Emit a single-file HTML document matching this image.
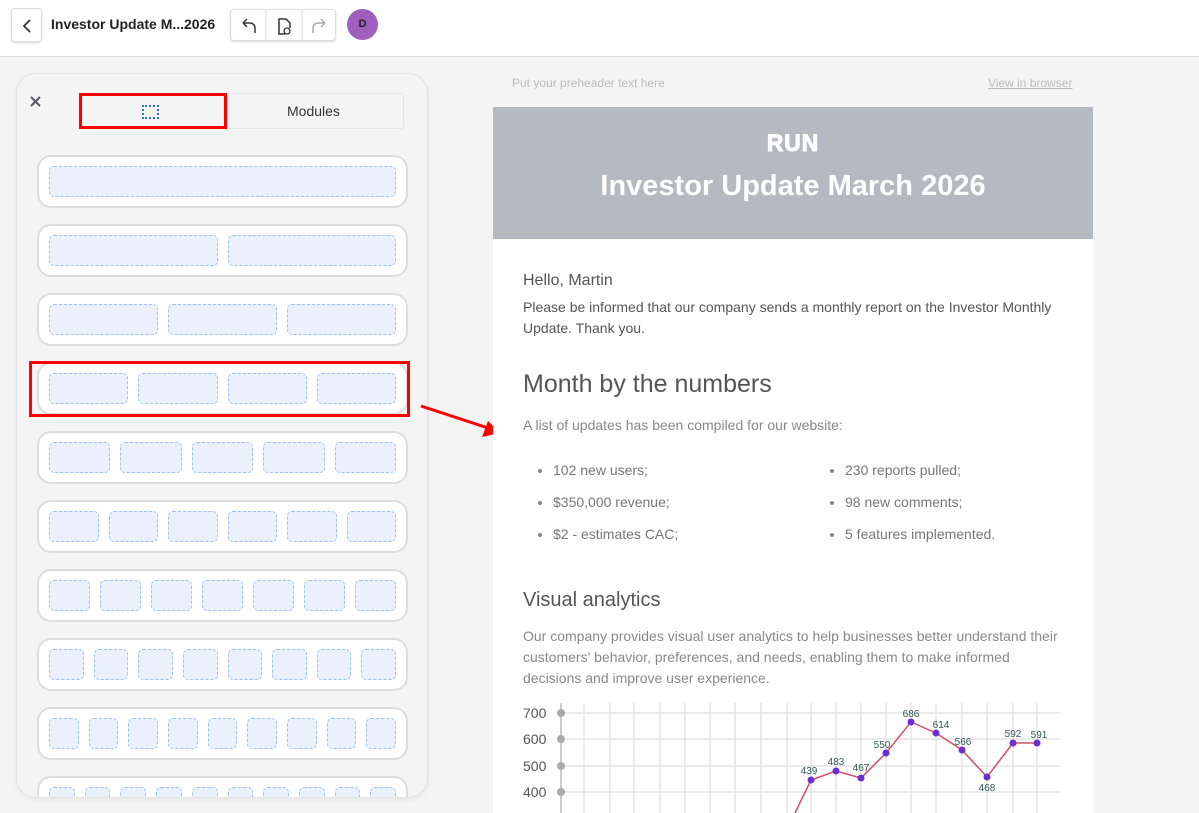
<!DOCTYPE html>
<html><head><meta charset="utf-8"><style>
*{box-sizing:border-box;margin:0;padding:0}
body{width:1199px;height:813px;overflow:hidden;background:#f4f4f5;font-family:"Liberation Sans",Arial,sans-serif;position:relative}
.top{position:absolute;left:0;top:0;width:1199px;height:57px;background:#fff;border-bottom:1px solid #ddd}
.btn{position:absolute;background:#fff;border:1px solid #ddd;border-radius:4px;box-shadow:0 1px 2px rgba(0,0,0,.15)}
.panel{position:absolute;left:16px;top:73px;width:412px;height:725px;background:#f4f4f4;border:1px solid #e2e2e2;border-radius:20px;overflow:hidden;box-shadow:0 2px 6px rgba(0,0,0,.06)}
.row{position:absolute;left:20px;width:371px;height:53px;background:#fff;border:2px solid #ddd;border-radius:14px;display:flex;gap:10px;padding:9px 10px}
.row div{flex:1;background:#eaf1fc;border:1px dashed #9dc1ee;border-radius:5px}
.email{position:absolute;left:493px;top:107px;width:600px;height:706px;background:#fff}
.hdr{height:132px;background:#b5bac1;color:#fff;text-align:center}
.p{position:absolute;left:30px;color:#555;font-size:14px;line-height:21px}
li{list-style:none;position:relative;padding-left:30px;color:#777;font-size:14px;height:32px}
li:before{content:"";position:absolute;left:15px;top:7px;width:4px;height:4px;border-radius:50%;background:#888}
</style></head><body>
<div class="top">
 <div class="btn" style="left:11px;top:8px;width:31px;height:34px"><svg width="31" height="34"><path d="M18 11 L12 17 L18 23" fill="none" stroke="#333" stroke-width="1.8"/></svg></div>
 <div style="position:absolute;left:51px;top:16px;font-size:14px;font-weight:bold;color:#222">Investor Update M...2026</div>
 <div class="btn" style="left:230px;top:9px;width:106px;height:32px">
  <svg width="106" height="32"><path d="M12 13h7a5 5 0 0 1 5 5v5 M12 13l4-4 M12 13l4 4" fill="none" stroke="#333" stroke-width="1.5"/><line x1="35" y1="0" x2="35" y2="32" stroke="#ddd"/><line x1="71" y1="0" x2="71" y2="32" stroke="#ddd"/><path d="M54 24h-6v-15h7l4 4v5" fill="none" stroke="#333" stroke-width="1.5"/><circle cx="56" cy="21" r="3" fill="none" stroke="#333" stroke-width="1.3"/><path d="M94 13h-7a5 5 0 0 0-5 5v5 M94 13l-4-4 M94 13l-4 4" fill="none" stroke="#aaa" stroke-width="1.5"/></svg></div>
 <div style="position:absolute;left:347px;top:9px;width:31px;height:31px;border-radius:50%;background:#a05fbf;color:#222;font-size:11px;font-weight:bold;text-align:center;line-height:31px">D</div>
</div>
<div class="panel">
 <svg style="position:absolute;left:13px;top:22px" width="11" height="11"><path d="M1 1L10 10M10 1L1 10" stroke="#556" stroke-width="2"/></svg>
 <div style="position:absolute;left:62px;top:19px;width:325px;height:36px;background:#f5f5f6;border:1px solid #e5e5e5;border-radius:3px"></div>
 <div style="position:absolute;left:62px;top:19px;width:148px;height:36px;border:3px solid #f00"></div>
 <div style="position:absolute;left:125px;top:31px;width:17px;height:14px;border:2px dotted #2f6fd6"></div>
 <div style="position:absolute;left:270px;top:29px;font-size:14px;color:#333">Modules</div>
 <div class="row" style="top:81px"><div></div></div>
 <div class="row" style="top:150px"><div></div><div></div></div>
 <div class="row" style="top:219px"><div></div><div></div><div></div></div>
 <div class="row" style="top:288px"><div></div><div></div><div></div><div></div></div>
 <div class="row" style="top:357px"><div></div><div></div><div></div><div></div><div></div></div>
 <div class="row" style="top:426px"><div></div><div></div><div></div><div></div><div></div><div></div></div>
 <div class="row" style="top:495px"><div></div><div></div><div></div><div></div><div></div><div></div><div></div></div>
 <div class="row" style="top:564px"><div></div><div></div><div></div><div></div><div></div><div></div><div></div><div></div></div>
 <div class="row" style="top:633px"><div></div><div></div><div></div><div></div><div></div><div></div><div></div><div></div><div></div></div>
 <div class="row" style="top:702px"><div></div><div></div><div></div><div></div><div></div><div></div><div></div><div></div><div></div><div></div></div>
 <div style="position:absolute;left:12px;top:287px;width:381px;height:56px;border:3px solid #f00"></div>
</div>
<svg style="position:absolute;left:418px;top:400px" width="90" height="45"><line x1="3" y1="6" x2="70" y2="28" stroke="#f00" stroke-width="3"/><path d="M82 33 L64 37 L70 21 Z" fill="#f00"/></svg>
<div style="position:absolute;left:512px;top:76px;font-size:12px;color:#bbb">Put your preheader text here</div>
<div style="position:absolute;left:988px;top:76px;font-size:12px;color:#bbb;text-decoration:underline">View in browser</div>
<div class="email">
 <div class="hdr"><div style="padding-top:23px;font-size:24px;font-weight:900;letter-spacing:1px;transform:scaleX(0.95);-webkit-text-stroke:1px #fff">RUN</div><div style="margin-top:12px;font-size:29px;font-weight:bold">Investor Update March 2026</div></div>
 <div class="p" style="top:163px;font-size:16px">Hello, Martin</div>
 <div class="p" style="top:190px;width:540px">Please be informed that our company sends a monthly report on the Investor Monthly Update. Thank you.</div>
 <div class="p" style="top:262px;font-size:25px;line-height:30px">Month by the numbers</div>
 <div class="p" style="top:308px;color:#888">A list of updates has been compiled for our website:</div>
 <ul style="position:absolute;left:30px;top:355px"><li>102 new users;</li><li>$350,000 revenue;</li><li>$2 - estimates CAC;</li></ul>
 <ul style="position:absolute;left:322px;top:355px"><li>230 reports pulled;</li><li>98 new comments;</li><li>5 features implemented.</li></ul>
 <div class="p" style="top:481px;font-size:20px;line-height:24px">Visual analytics</div>
 <div class="p" style="top:519px;width:545px;color:#888">Our company provides visual user analytics to help businesses better understand their customers' behavior, preferences, and needs, enabling them to make informed decisions and improve user experience.</div>
</div>
<svg style="position:absolute;left:493px;top:695px" width="600" height="118" font-family="Liberation Sans" >
 <g stroke="#e4e4e4" stroke-width="1.5">
  <line x1="68" y1="18" x2="567" y2="18"/><line x1="68" y1="44" x2="567" y2="44"/><line x1="68" y1="71" x2="567" y2="71"/><line x1="68" y1="97" x2="567" y2="97"/>
  <line x1="91" y1="8" x2="91" y2="118"/><line x1="117" y1="8" x2="117" y2="118"/><line x1="141" y1="8" x2="141" y2="118"/><line x1="167" y1="8" x2="167" y2="118"/><line x1="192" y1="8" x2="192" y2="118"/><line x1="217" y1="8" x2="217" y2="118"/><line x1="242" y1="8" x2="242" y2="118"/><line x1="268" y1="8" x2="268" y2="118"/><line x1="294" y1="8" x2="294" y2="118"/><line x1="318" y1="8" x2="318" y2="118"/><line x1="343" y1="8" x2="343" y2="118"/><line x1="368" y1="8" x2="368" y2="118"/><line x1="393" y1="8" x2="393" y2="118"/><line x1="418" y1="8" x2="418" y2="118"/><line x1="443" y1="8" x2="443" y2="118"/><line x1="469" y1="8" x2="469" y2="118"/><line x1="494" y1="8" x2="494" y2="118"/><line x1="520" y1="8" x2="520" y2="118"/><line x1="544" y1="8" x2="544" y2="118"/>
 </g>
 <line x1="68" y1="8" x2="68" y2="118" stroke="#bbb" stroke-width="1.5"/>
 <g fill="#aaa"><circle cx="68" cy="18" r="4"/><circle cx="68" cy="44" r="4"/><circle cx="68" cy="71" r="4"/><circle cx="68" cy="97" r="4"/></g>
 <g font-size="14" fill="#555"><text x="30" y="23">700</text><text x="30" y="49">600</text><text x="30" y="76">500</text><text x="30" y="102">400</text></g>
 <polyline points="302,118 318,85 343,76 368,83 393,58 418,27 443,38 469,55 494,82 520,48 544,48" fill="none" stroke="#d0506a" stroke-width="1.5"/>
 <g fill="#6a2fd0"><circle cx="318" cy="85" r="3.5"/><circle cx="343" cy="76" r="3.5"/><circle cx="368" cy="83" r="3.5"/><circle cx="393" cy="58" r="3.5"/><circle cx="418" cy="27" r="3.5"/><circle cx="443" cy="38" r="3.5"/><circle cx="469" cy="55" r="3.5"/><circle cx="494" cy="82" r="3.5"/><circle cx="520" cy="48" r="3.5"/><circle cx="544" cy="48" r="3.5"/></g>
 <g font-size="10" fill="#355" text-anchor="middle"><text x="316" y="79">439</text><text x="343" y="70">483</text><text x="368" y="76">467</text><text x="389" y="53">550</text><text x="418" y="22">686</text><text x="448" y="33">614</text><text x="470" y="50">566</text><text x="494" y="96">468</text><text x="520" y="42">592</text><text x="546" y="43">591</text></g>
</svg>
</body></html>
